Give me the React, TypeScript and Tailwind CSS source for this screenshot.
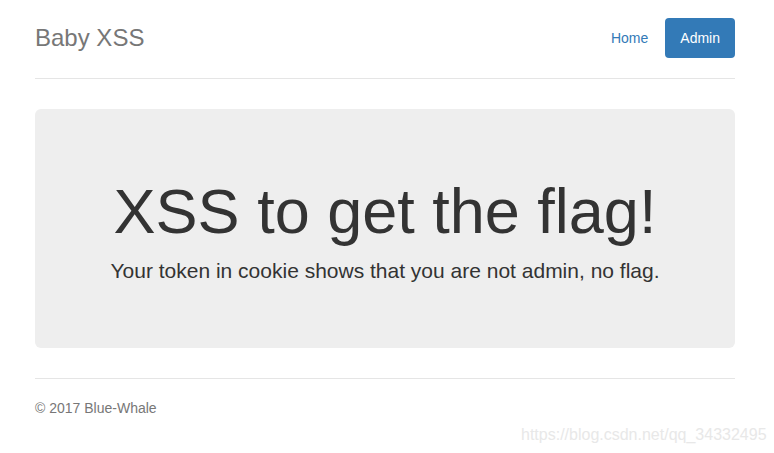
export default function App() {
  return (
    <div className="relative min-h-[453px] bg-white pt-[18px] font-['Liberation_Sans',Arial,sans-serif] text-[14px] leading-[20px] text-[#333]">
      <div className="ml-[35px] w-[700px]">
        <div className="flex items-center justify-between border-b border-[#e5e5e5] pb-5">
          <h3 className="m-0 text-[24px] leading-[40px] text-[#777]">Baby XSS</h3>
          <ul className="flex gap-[2px]">
            <li>
              <a className="block rounded px-[15px] py-[10px] text-[#337ab7]" href="#">
                Home
              </a>
            </li>
            <li>
              <a className="block rounded bg-[#337ab7] px-[15px] py-[10px] text-white" href="#">
                Admin
              </a>
            </li>
          </ul>
        </div>

        <div className="mt-[30px] mb-[30px] rounded-md bg-[#eee] pt-12 pb-[47px] text-center">
          <h1 className="mt-5 mb-[10px] text-[63px] leading-[1.1] text-[#333]">XSS to get the flag!</h1>
          <p className="mb-[15px] text-[21px] leading-[30px]">
            Your token in cookie shows that you are not admin, no flag.
          </p>
        </div>

        <div className="border-t border-[#e5e5e5] pt-[19px] text-[#777]">
          <p>© 2017 Blue-Whale</p>
        </div>
      </div>

      <div className="absolute left-[521px] top-[425px] text-[16px] leading-[20px] text-[#e8e8e8]">
        https://blog.csdn.net/qq_34332495
      </div>
    </div>
  );
}
